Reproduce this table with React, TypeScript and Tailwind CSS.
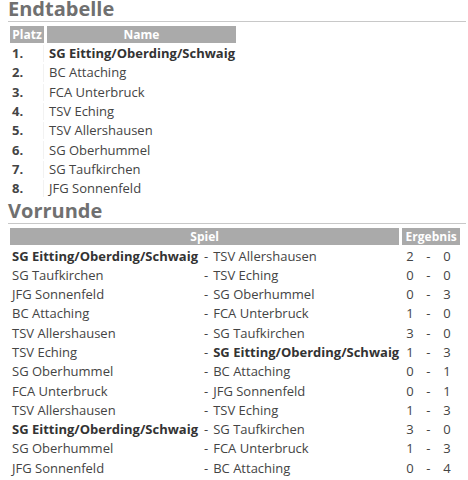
const ranking = [
  'SG Eitting/Oberding/Schwaig',
  'BC Attaching',
  'FCA Unterbruck',
  'TSV Eching',
  'TSV Allershausen',
  'SG Oberhummel',
  'SG Taufkirchen',
  'JFG Sonnenfeld',
];

const winner = 'SG Eitting/Oberding/Schwaig';

const games: [string, string, number, number][] = [
  ['SG Eitting/Oberding/Schwaig', 'TSV Allershausen', 2, 0],
  ['SG Taufkirchen', 'TSV Eching', 0, 0],
  ['JFG Sonnenfeld', 'SG Oberhummel', 0, 3],
  ['BC Attaching', 'FCA Unterbruck', 1, 0],
  ['TSV Allershausen', 'SG Taufkirchen', 3, 0],
  ['TSV Eching', 'SG Eitting/Oberding/Schwaig', 1, 3],
  ['SG Oberhummel', 'BC Attaching', 0, 1],
  ['FCA Unterbruck', 'JFG Sonnenfeld', 0, 1],
  ['TSV Allershausen', 'TSV Eching', 1, 3],
  ['SG Eitting/Oberding/Schwaig', 'SG Taufkirchen', 3, 0],
  ['SG Oberhummel', 'FCA Unterbruck', 1, 3],
  ['JFG Sonnenfeld', 'BC Attaching', 0, 4],
];

function Heading({ children }: { children: string }) {
  return (
    <h2 className="text-[20px] font-bold leading-[18px] pb-[3px] text-[#707070] border-b border-[#c8c8c8]">
      {children}
    </h2>
  );
}

const th = 'bg-[#aaaaaa] text-white font-bold text-[12px] h-[17px] leading-[17px] p-0 text-center';
const td = 'h-[17.3px] leading-[17px] p-0 pl-[2px] text-left whitespace-nowrap';

export default function App() {
  return (
    <div className="pl-2 pr-0.5 text-[13px] text-[#444] bg-white" style={{ fontFamily: '"Open Sans", "DejaVu Sans", sans-serif' }}>
      {/* Endtabelle */}
      <Heading>Endtabelle</Heading>
      <table className="mt-[2px] border-separate [border-spacing:3px_2px] -ml-[1px]">
        <thead>
          <tr>
            <th className={`${th} w-[34px]`}>Platz</th>
            <th className={`${th} w-[189px]`}>Name</th>
          </tr>
        </thead>
        <tbody>
          {ranking.map((team, i) => (
            <tr key={team}>
              <td className={`${td} font-bold text-[#444] border-r border-[#f2f2f2]`}>{i + 1}.</td>
              <td className={`${td} ${team === winner ? 'font-bold text-[#333]' : ''}`}>{team}</td>
            </tr>
          ))}
        </tbody>
      </table>

      {/* Vorrunde */}
      <div className="mt-[3px]">
        <Heading>Vorrunde</Heading>
      </div>
      <table className="mt-[2px] border-separate [border-spacing:3px_2px] -ml-[1px]">
        <thead>
          <tr>
            <th colSpan={3} className={th}>Spiel</th>
            <th colSpan={3} className={th}>Ergebnis</th>
          </tr>
        </thead>
        <tbody>
          {games.map(([home, away, a, b], i) => (
            <tr key={i}>
              <td className={`${td} w-[189px] ${home === winner ? 'font-bold text-[#333]' : ''}`}>{home}</td>
              <td className={`${td} w-[6px]`}>-</td>
              <td className={`${td} w-[186px] ${away === winner ? 'font-bold text-[#333]' : ''}`}>{away}</td>
              <td className={`${td} w-[16px] !pl-[4px]`}>{a}</td>
              <td className={`${td} w-[16px] !pl-[5px]`}>-</td>
              <td className={`${td} w-[20px] !pl-[3px]`}>{b}</td>
            </tr>
          ))}
        </tbody>
      </table>
    </div>
  );
}
